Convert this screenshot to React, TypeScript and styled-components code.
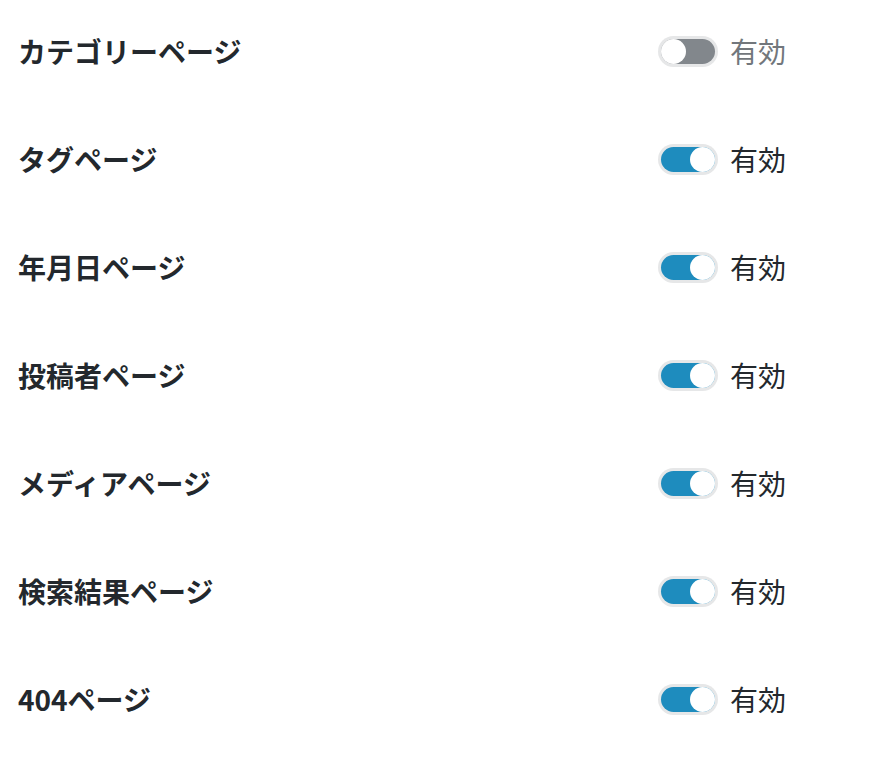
import styled, { createGlobalStyle } from 'styled-components'

const GlobalStyle = createGlobalStyle`
  html, body {
    margin: 0;
    padding: 0;
    background: #ffffff;
  }
  body {
    font-family: 'Noto Sans CJK JP', 'Noto Sans', sans-serif;
    color: #23282d;
  }
`

const SettingsList = styled.div`
  display: flex;
  flex-direction: column;
  gap: 6px;
  padding: 0 18px;
`

const SettingRow = styled.div`
  display: grid;
  grid-template-columns: 643px auto;
  align-items: center;
  min-height: 102px;
`

const RowLabel = styled.div`
  font-size: 28px;
  font-weight: 700;
  color: #23282d;
  line-height: 1;
`

const ToggleLabel = styled.label<{ $on: boolean }>`
  display: flex;
  align-items: center;
  gap: 15px;
  font-size: 28px;
  line-height: 1;
  color: ${(p) => (p.$on ? '#23282d' : '#72777c')};
  cursor: pointer;
`

const Track = styled.span<{ $on: boolean }>`
  position: relative;
  display: block;
  width: 54px;
  height: 25px;
  border-radius: 13px;
  background: ${(p) => (p.$on ? '#1e8cbe' : '#82878c')};
  box-shadow: 0 0 0 3px #e6e7e8;
`

const Knob = styled.span<{ $on: boolean }>`
  position: absolute;
  top: 0;
  left: ${(p) => (p.$on ? '29px' : '0')};
  width: 25px;
  height: 25px;
  border-radius: 50%;
  background: #ffffff;
`

const rows = [
  { label: 'カテゴリーページ', on: false },
  { label: 'タグページ', on: true },
  { label: '年月日ページ', on: true },
  { label: '投稿者ページ', on: true },
  { label: 'メディアページ', on: true },
  { label: '検索結果ページ', on: true },
  { label: '404ページ', on: true },
]

function App() {
  return (
    <>
      <GlobalStyle />
      <SettingsList>
        {rows.map((row) => (
          <SettingRow key={row.label}>
            <RowLabel>{row.label}</RowLabel>
            <ToggleLabel $on={row.on}>
              <Track $on={row.on}>
                <Knob $on={row.on} />
              </Track>
              有効
            </ToggleLabel>
          </SettingRow>
        ))}
      </SettingsList>
    </>
  )
}

export default App
